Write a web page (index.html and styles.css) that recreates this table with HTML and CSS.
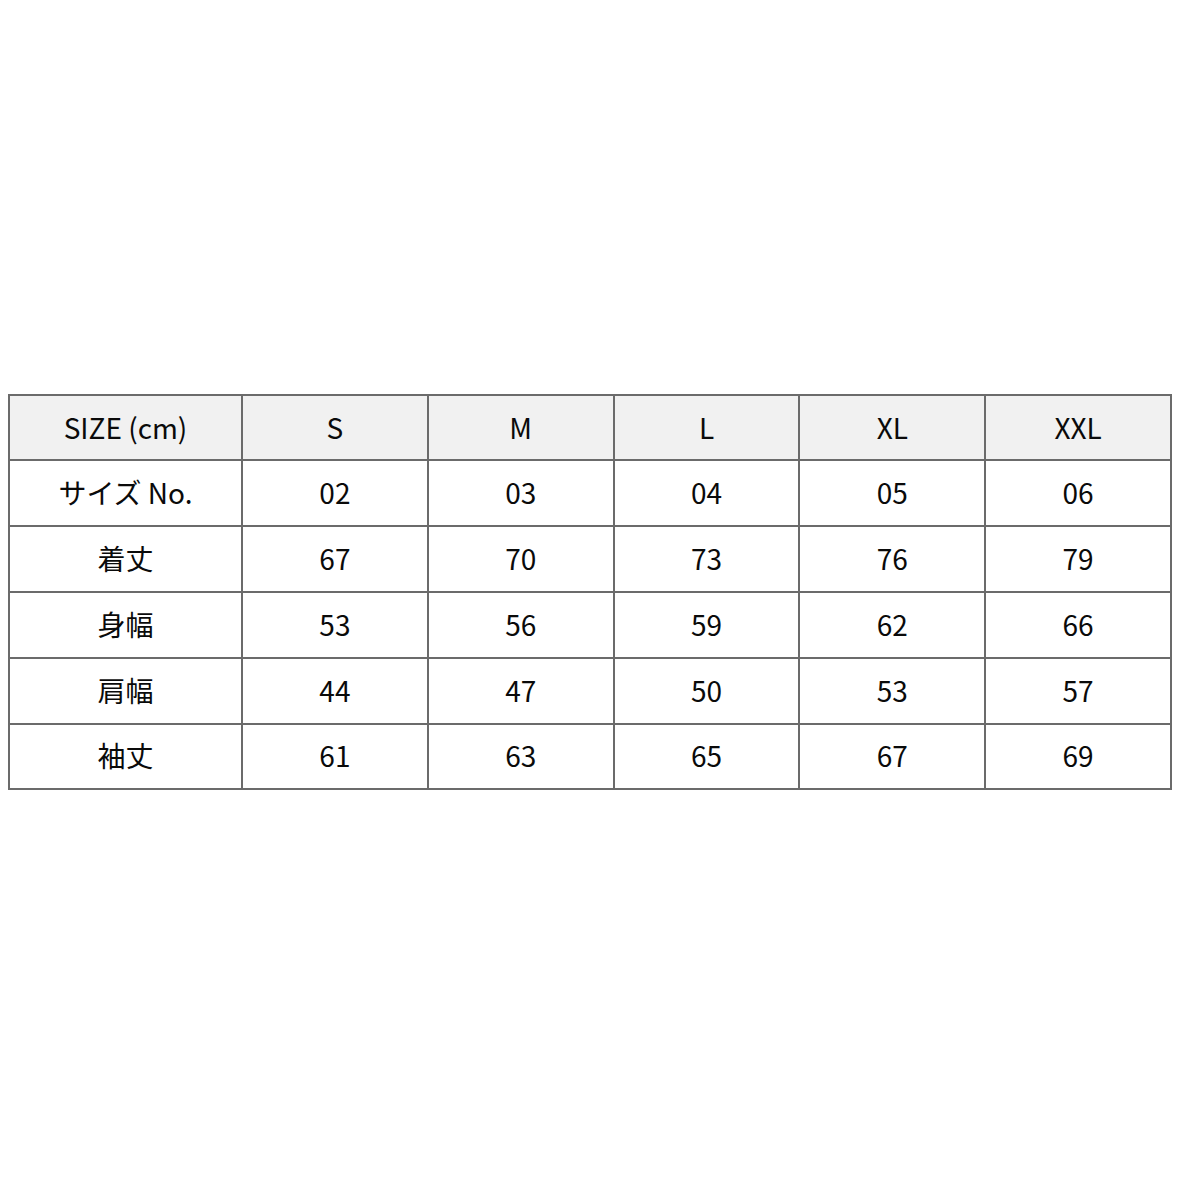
FILE: index.html
```html
<!DOCTYPE html>
<html lang="ja">
<head>
<meta charset="utf-8">
<link rel="stylesheet" href="styles.css">
</head>
<body>
<div class="page">
<table class="size-table">
<colgroup>
<col class="c-label"><col><col><col><col><col>
</colgroup>
<thead>
<tr><th>SIZE (cm)</th><th>S</th><th>M</th><th>L</th><th>XL</th><th>XXL</th></tr>
</thead>
<tbody>
<tr><td>サイズ No.</td><td>02</td><td>03</td><td>04</td><td>05</td><td>06</td></tr>
<tr><td>着丈</td><td>67</td><td>70</td><td>73</td><td>76</td><td>79</td></tr>
<tr><td>身幅</td><td>53</td><td>56</td><td>59</td><td>62</td><td>66</td></tr>
<tr><td>肩幅</td><td>44</td><td>47</td><td>50</td><td>53</td><td>57</td></tr>
<tr><td>袖丈</td><td>61</td><td>63</td><td>65</td><td>67</td><td>69</td></tr>
</tbody>
</table>
</div>
</body>
</html>
```
FILE: styles.css
```css
html, body {
  margin: 0;
  padding: 0;
  background: #ffffff;
}
.page {
  height: 1181px;
  display: flex;
  align-items: center;
  justify-content: flex-start;
  padding-left: 8px;
}
.size-table {
  width: 1164px;
  border-collapse: collapse;
  table-layout: fixed;
  font-family: "Noto Sans CJK JP", "Noto Sans", sans-serif;
  font-size: 28px;
  color: #0a0a0a;
  margin-top: 3px;
}
.c-label {
  width: 233px;
}
.size-table th,
.size-table td {
  border: 2px solid #6b6b6b;
  height: 61.8px;
  padding: 0 0 2px 0;
  text-align: center;
  vertical-align: middle;
  font-weight: 400;
  line-height: 1;
}
.size-table thead th {
  background: #f1f1f1;
}
```
